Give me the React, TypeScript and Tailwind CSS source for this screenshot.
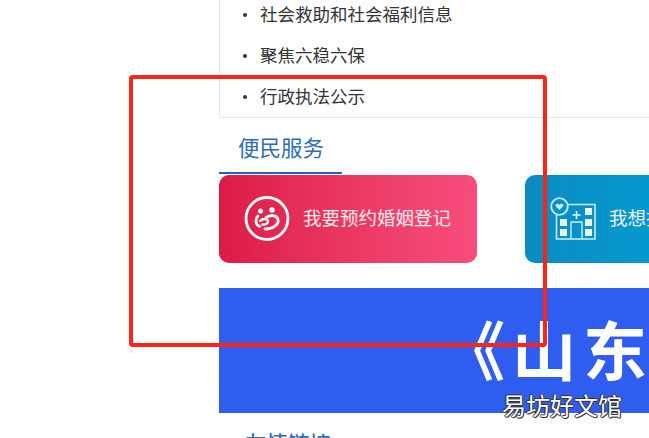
const font = { fontFamily: '"Noto Sans CJK SC", "Liberation Sans", sans-serif' };

const items = ["社会救助和社会福利信息", "聚焦六稳六保", "行政执法公示"];

function MarriageIcon() {
  return (
    <svg width="46" height="46" viewBox="0 0 46 46" fill="none" className="shrink-0">
      <circle cx="23" cy="22.500" r="21" stroke="white" strokeWidth="2.800" />
      <circle cx="16.500" cy="15" r="2.500" fill="white" />
      <circle cx="28" cy="14" r="2.700" fill="white" />
      <path d="M14 20c-3 3-3 9 2 10.500" stroke="white" strokeWidth="2.600" strokeLinecap="round" />
      <path d="M22 21.500c4-3 11-2.500 12 2 1 5-5 9.500-13 9.500" stroke="white" strokeWidth="2.800" strokeLinecap="round" />
      <path d="M16 25c3-3 8-2.500 8 .5 0 2-3 3.500-5.500 3" stroke="white" strokeWidth="2.400" strokeLinecap="round" />
    </svg>
  );
}

function HospitalIcon() {
  return (
    <svg width="46" height="44" viewBox="0 0 46 44" fill="none" className="shrink-0">
      <path d="M16 7.500h29v34.500H6.500V18" stroke="#cdeef8" strokeWidth="1.600" />
      <circle cx="9.500" cy="9.500" r="8.300" fill="#0793c8" stroke="#cdeef8" strokeWidth="1.800" />
      <path d="M9.500 13l-3.500-3.500c-1.300-1.800 1-3.500 2.300-2.500l1.200.8 1.200-.8c1.300-1 3.600.7 2.300 2.500z" fill="#cdeef8" />
      <g fill="#e6f7fc">
        <rect x="35" y="11" width="7" height="7" />
        <rect x="35" y="22" width="7" height="7" />
        <rect x="35" y="32" width="7" height="7" />
        <rect x="10" y="22" width="7" height="7" />
        <rect x="10" y="32" width="7" height="7" />
      </g>
      <path d="M26.500 14v8M22.500 18h8" stroke="#e6f7fc" strokeWidth="1.600" />
      <path d="M21 42V25h11v17" stroke="#cdeef8" strokeWidth="1.400" />
    </svg>
  );
}

export default function App() {
  return (
    <div className="relative h-[438px] w-full overflow-hidden bg-white pl-[219px]" style={font}>
      <ul className="-mt-[6px] h-[124px] border-b border-l border-[#e8e8e8]">
        {items.map((t) => (
          <li key={t} className="flex h-[41px] items-center text-[17.500px] text-[#333]">
            <span className="ml-[23px] h-[4px] w-[4px] shrink-0 rounded-full bg-[#333]" />
            <span className="ml-[13px]">{t}</span>
          </li>
        ))}
      </ul>

      <div className="h-[56px] w-[123px] border-b-[2px] border-[#2266b5] pl-[19px] pt-[11px] text-[21.500px] leading-[36px] text-[#2d6db8]">
        便民服务
      </div>

      <div className="mt-[1px] flex gap-[48px]">
        <div className="flex h-[88px] w-[258px] shrink-0 items-center rounded-[10px] bg-gradient-to-r from-[#dc1a46] to-[#f74d7d] pl-[25px]">
          <MarriageIcon />
          <span className="ml-[13px] -translate-y-px text-[18.500px] text-white/90">我要预约婚姻登记</span>
        </div>
        <div className="flex h-[88px] w-[258px] shrink-0 items-center rounded-[10px] bg-gradient-to-r from-[#0a8cc2] to-[#00a6da] pl-[25px]">
          <HospitalIcon />
          <span className="ml-[13px] -translate-y-px whitespace-nowrap text-[18.500px] text-white/90">我想挂号</span>
        </div>
      </div>

      <div className="mt-[25px] flex h-[125px] items-center overflow-hidden bg-[#2e5df0] pb-[8px] pl-[222px] text-[64px] font-bold leading-none tracking-[7px] whitespace-nowrap text-white">
        《山东省
      </div>

      <div className="pl-[26px] pt-[15px] text-[21.500px] font-medium leading-[30px] text-[#2d6db8]">友情链接</div>

      <div className="absolute left-[129px] top-[75px] h-[272px] w-[418px] rounded-[4px] border-[4px] border-[#fb2418]" />

      <div className="absolute left-[502px] top-[388px] text-[24px] leading-[34px] text-white [text-shadow:-1px_0_#333,1px_0_#333,0_-1px_#333,0_1px_#333,1px_1px_#555]">
        易坊好文馆
      </div>
    </div>
  );
}
